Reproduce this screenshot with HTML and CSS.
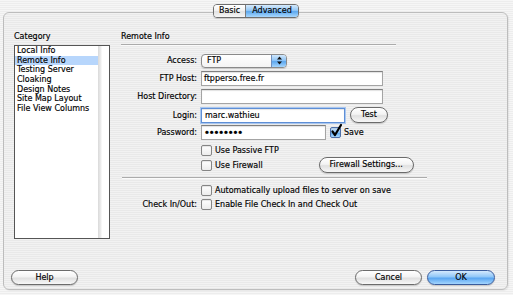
FILE: index.html
```html
<!DOCTYPE html>
<html>
<head>
<meta charset="utf-8">
<link rel="stylesheet" href="styles.css">
</head>
<body>
<div class="window">
  <div class="tabs"><span class="seg">Basic</span><span class="seg active">Advanced</span></div>
  <div class="group">
    <div class="main">
      <div class="cat">
        <div class="title">Category</div>
        <div class="list">
          <ul class="items">
            <li>Local Info</li>
            <li class="sel">Remote Info</li>
            <li>Testing Server</li>
            <li>Cloaking</li>
            <li>Design Notes</li>
            <li>Site Map Layout</li>
            <li>File View Columns</li>
          </ul>
          <div class="track"></div>
        </div>
      </div>
      <div class="panel">
        <div class="title">Remote Info</div>
        <div class="rule rule-head"></div>
        <div class="row r-access">
          <span class="lbl">Access:</span>
          <div class="popup"><span class="pop-text">FTP</span><span class="pop-arrows"><svg width="7" height="9" viewBox="0 0 7 9"><path d="M3.5 0.5 L6 3.5 L1 3.5 Z M1 5.5 L6 5.5 L3.5 8.5 Z" fill="#111"/></svg></span></div>
        </div>
        <div class="row r-field">
          <span class="lbl">FTP Host:</span>
          <div class="field w-long">ftpperso.free.fr</div>
        </div>
        <div class="row r-field">
          <span class="lbl">Host Directory:</span>
          <div class="field w-long"></div>
        </div>
        <div class="row r-field">
          <span class="lbl">Login:</span>
          <div class="ctrls">
            <div class="field focus w-login">marc.wathieu</div>
            <button class="btn btn-test">Test</button>
          </div>
        </div>
        <div class="row r-field">
          <span class="lbl">Password:</span>
          <div class="ctrls">
            <div class="field w-pass pass">••••••••</div>
            <span class="check checked"><svg class="tick" width="13" height="15" viewBox="0 0 13 15"><path d="M2.5 8.5 L5 12 L11 2" fill="none" stroke="#000" stroke-width="2.2" stroke-linecap="round" stroke-linejoin="round"/></svg></span>
            <span class="ck-lbl">Save</span>
          </div>
        </div>
        <div class="row r-passive">
          <span class="lbl"></span>
          <div class="ctrls"><span class="check"></span><span class="ck-lbl">Use Passive FTP</span></div>
        </div>
        <div class="row r-firewall">
          <span class="lbl"></span>
          <div class="ctrls">
            <span class="check"></span><span class="ck-lbl">Use Firewall</span>
            <button class="btn btn-fw">Firewall Settings...</button>
          </div>
        </div>
        <div class="rule rule-mid"></div>
        <div class="row r-auto">
          <span class="lbl"></span>
          <div class="ctrls"><span class="check"></span><span class="ck-lbl">Automatically upload files to server on save</span></div>
        </div>
        <div class="row r-checkin">
          <span class="lbl">Check In/Out:</span>
          <div class="ctrls"><span class="check"></span><span class="ck-lbl">Enable File Check In and Check Out</span></div>
        </div>
      </div>
    </div>
    <div class="buttons">
      <button class="btn btn-big">Help</button>
      <div class="right-btns">
        <button class="btn btn-big">Cancel</button>
        <button class="btn btn-big btn-default">OK</button>
      </div>
    </div>
  </div>
</div>
</body>
</html>
```
FILE: styles.css
```css
* { box-sizing: border-box; }
html, body { margin: 0; padding: 0; }
body {
  width: 513px;
  height: 295px;
  overflow: hidden;
  font-family: "DejaVu Sans", "Liberation Sans", sans-serif;
  font-size: 8px;
  color: #000;
  -webkit-text-stroke: 0.15px #000;
  background: repeating-linear-gradient(to bottom, #f6f6f6 0, #f6f6f6 1px, #ededed 1px, #ededed 2px);
}
.window {
  position: relative;
  width: 513px;
  height: 295px;
  padding: 12px 5px 0 3px;
}
.tabs {
  position: absolute;
  left: 213px;
  top: 4px;
  height: 14px;
  display: flex;
  border: 1px solid #6e6e6e;
  border-radius: 4px;
  overflow: hidden;
  box-shadow: 0 1px 1px rgba(0,0,0,0.15);
  z-index: 2;
}
.seg {
  display: flex;
  align-items: center;
  justify-content: center;
  height: 12px;
  line-height: 12px;
  background: linear-gradient(#ffffff, #f2f2f2 45%, #e2e2e2 55%, #f6f6f6);
}
.seg:first-child { width: 32px; border-right: 1px solid #7a7a7a; }
.seg.active {
  width: 52px;
  background: linear-gradient(#d6eafc, #94c8f6 45%, #5ea9ef 55%, #a9d8fd);
}
.group {
  height: 278px;
  border: 1px solid #bdbdbd;
  border-radius: 6px;
  background: repeating-linear-gradient(to bottom, #f2f2f2 0, #f2f2f2 1px, #e9e9e9 1px, #e9e9e9 2px);
  box-shadow: 1px 1px 1px rgba(0,0,0,0.06);
  display: flex;
  flex-direction: column;
}
.main {
  flex: 1;
  display: flex;
  padding: 18px 0 0 10px;
  gap: 11px;
}
.title {
  height: 11px;
  line-height: 11px;
}
.cat { width: 96px; }
.list {
  margin-top: 3px;
  width: 96px;
  height: 194px;
  border: 1px solid #555;
  background: #fff;
  display: flex;
}
.items {
  flex: 1;
  list-style: none;
  margin: 0;
  padding: 0;
}
.items li {
  height: 9.67px;
  line-height: 9.67px;
  padding-left: 2px;
  white-space: nowrap;
}
.items li.sel { background: #b7d6fc; }
.track {
  width: 11px;
  background: linear-gradient(to right, #d9d9d9, #eeeeee 3px, #ffffff 4px);
}
.panel { width: 376px; }
.rule {
  height: 2px;
  border-top: 1px solid #ababab;
  border-bottom: 1px solid #fbfbfb;
}
.rule-head { margin-top: 2px; width: 275px; }
.rule-mid { margin-top: 4px; margin-left: 1px; width: 305px; }
.row {
  display: grid;
  grid-template-columns: 76px 1fr;
  column-gap: 4px;
  align-items: center;
  height: 15px;
  margin-top: 3px;
}
.r-access { margin-top: 7px; }
.r-passive { height: 14px; }
.r-firewall { height: 16px; margin-top: 0; }
.r-auto { height: 14px; margin-top: 4px; }
.r-checkin { height: 14px; margin-top: 0; }
.lbl { text-align: right; white-space: nowrap; }
.ctrls {
  display: flex;
  align-items: center;
  height: 100%;
}
.popup {
  width: 86px;
  height: 14px;
  border: 1px solid #8a8a8a;
  border-radius: 4px;
  background: linear-gradient(#ffffff, #f4f4f4);
  display: flex;
  overflow: hidden;
  box-shadow: 0 1px 1px rgba(0,0,0,0.15);
}
.pop-text { flex: 1; padding-left: 5px; line-height: 12px; }
.pop-arrows {
  width: 15px;
  display: flex;
  align-items: center;
  justify-content: center;
  border-left: 1px solid #6f8fbf;
  background: linear-gradient(#d0e7fc, #8ec4f6 45%, #5da8ef 55%, #a6d6fd);
}
.field {
  height: 15px;
  line-height: 13px;
  padding-left: 2px;
  background: #fff;
  border: 1px solid #a4a4a4;
  border-top-color: #7f7f7f;
  box-shadow: inset 0 1px 1px rgba(0,0,0,0.12);
  white-space: nowrap;
}
.w-long { width: 182px; }
.w-login { width: 144px; }
.w-pass { width: 125px; }
.field.focus {
  border: 1px solid #5f8fd6;
  box-shadow: 0 0 0 1px #a9c7f0, inset 0 1px 1px rgba(0,0,0,0.1);
  padding-left: 3px;
}
.pass {
  font-family: "Liberation Sans", sans-serif;
  font-size: 11px;
  font-weight: bold;
  letter-spacing: 0.9px;
  padding-left: 3px;
  line-height: 13px;
}
.btn {
  font-family: inherit;
  font-size: 8px;
  color: #000;
  -webkit-text-stroke: 0.15px #000;
  height: 16px;
  padding: 0;
  border: 1px solid #6b6b6b;
  border-radius: 8px;
  background: linear-gradient(#ffffff, #f3f3f3 45%, #e0e0e0 55%, #f7f7f7);
  box-shadow: 0 1px 1px rgba(0,0,0,0.18);
  line-height: 14px;
}
.btn-test { width: 38px; margin-left: 5px; }
.btn-fw { width: 95px; margin-left: 56px; }
.check {
  position: relative;
  width: 11px;
  height: 11px;
  flex: none;
  border: 1px solid #858585;
  border-radius: 2px;
  background: linear-gradient(#ffffff, #ececec);
  box-shadow: inset 0 1px 1px rgba(0,0,0,0.1);
}
.check.checked {
  margin-left: 4px;
  border-color: #4d6fa8;
  background: linear-gradient(#cfe6fc, #8ac2f6 50%, #5ea9ef 55%, #a9d8fd);
}
.tick {
  position: absolute;
  left: -1px;
  top: -5px;
}
.ck-lbl { margin-left: 3px; white-space: nowrap; }
.buttons {
  display: flex;
  justify-content: space-between;
  align-items: flex-end;
  padding: 0 12px 4px 7px;
}
.right-btns { display: flex; gap: 5px; }
.btn-big { width: 67px; height: 15px; line-height: 13px; }
.btn-default {
  width: 68px;
  border-color: #3a5c9c;
  background: linear-gradient(#d4e9fd, #90c7f8 45%, #5aa6f1 55%, #a3d5fe);
}
```
